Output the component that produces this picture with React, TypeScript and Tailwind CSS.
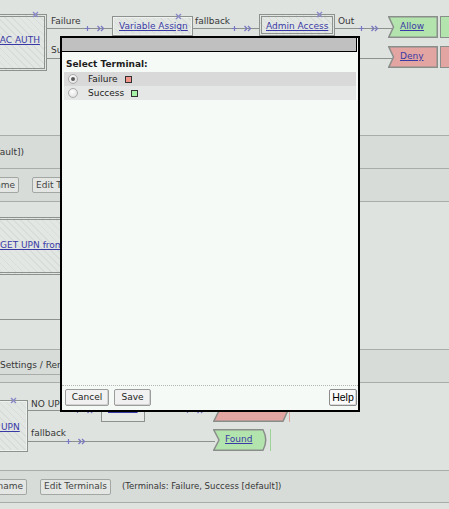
import React from "react"

const LINK = "whitespace-nowrap text-[#3a3aa6] underline decoration-[#3a3aa6] underline-offset-[1px]"
const HATCH =
  "bg-[repeating-linear-gradient(45deg,#d9ddda_0px,#d9ddda_1px,#e3e7e4_1px,#e3e7e4_5px)]"

function Line({ className }: { className: string }) {
  return <div className={`absolute h-px bg-[#8e928f] ${className}`} />
}

function Conn({ className }: { className: string }) {
  return (
    <svg className={`absolute ${className}`} width="21" height="7" viewBox="0 0 21 7">
      <path d="M0 3.5h5M2.5 1v5" stroke="#7878c0" strokeWidth="1.2" />
      <path d="M12.5 1l2.5 2.5L12.5 6M16 1l2.5 2.5L16 6" stroke="#7878c0" strokeWidth="1.3" fill="none" />
    </svg>
  )
}

function Close({ className }: { className: string }) {
  return (
    <svg className={`absolute ${className}`} width="7" height="7" viewBox="0 0 7 7">
      <path d="M1 1l5 5M6 1L1 6" stroke="#8a8ac8" strokeWidth="1.4" />
    </svg>
  )
}

function Btn({ children, className = "" }: { children: React.ReactNode; className?: string }) {
  return (
    <div
      className={`flex h-[16px] shrink-0 items-center whitespace-nowrap rounded-[2px] border border-[#a3a7a4] bg-[#e3e6e3] px-[3px] text-[#444] ${className}`}
    >
      {children}
    </div>
  )
}

function TopCanvas() {
  return (
    <div className="relative h-[135px] shrink-0">
      {/* MAC AUTH */}
      <div className={`absolute left-[-40px] top-[14px] h-[57px] w-[87px] border-[3px] border-double border-[#8e928f] ${HATCH}`} />
      <Close className="left-[32px] top-[11px]" />
      <a className={`absolute left-[-8px] top-[35px] ${LINK}`}>MAC AUTH</a>

      <Line className="left-[47px] top-[28px] w-[65px]" />
      <span className="absolute left-[51px] top-[16px]">Failure</span>
      <Conn className="left-[85px] top-[25px]" />
      <Line className="left-[47px] top-[58px] w-[20px]" />
      <span className="absolute left-[51px] top-[45px]">Su</span>

      {/* Variable Assign */}
      <div className={`absolute left-[112px] top-[16px] h-[20px] w-[81px] border border-[#8e928f] shadow-[inset_0_0_0_1px_#eef1ee] ${HATCH}`} />
      <Close className="left-[175px] top-[13px]" />
      <a className={`absolute left-[119px] top-[21px] ${LINK}`}>Variable Assign</a>

      <Line className="left-[193px] top-[28px] w-[66px]" />
      <span className="absolute left-[195px] top-[16px]">fallback</span>
      <Conn className="left-[232px] top-[25px]" />

      {/* Admin Access */}
      <div className={`absolute left-[259px] top-[14px] h-[22px] w-[76px] border-[3px] border-double border-[#8e928f] ${HATCH}`} />
      <Close className="left-[316px] top-[11px]" />
      <a className={`absolute left-[266px] top-[21px] ${LINK}`}>Admin Access</a>

      <Line className="left-[335px] top-[28px] w-[58px]" />
      <span className="absolute left-[338px] top-[16px]">Out</span>
      <Conn className="left-[359px] top-[25px]" />

      {/* Allow */}
      <div className="absolute left-[388px] top-[16px] h-[22px] w-[50px]">
        <svg className="absolute inset-0" width="50" height="22" viewBox="0 0 50 22">
          <path d="M0.75 0.75H49.25V21.25H0.75L5.5 11Z" fill="#b3e4ad" stroke="#8a8e8b" strokeWidth="1.5" />
        </svg>
        <a className={`absolute left-[12px] top-[5px] ${LINK}`}>Allow</a>
      </div>
      <div className="absolute left-[440px] top-[16px] h-[22px] w-[14px] border border-[#8a8e8b] bg-[#b3e4ad]" />

      {/* Deny */}
      <Line className="left-[300px] top-[58px] w-[93px]" />
      <div className="absolute left-[388px] top-[46px] h-[22px] w-[50px]">
        <svg className="absolute inset-0" width="50" height="22" viewBox="0 0 50 22">
          <path d="M0.75 0.75H49.25V21.25H0.75L5.5 11Z" fill="#e2a5a1" stroke="#8a8e8b" strokeWidth="1.5" />
        </svg>
        <a className={`absolute left-[12px] top-[5px] ${LINK}`}>Deny</a>
      </div>
      <div className="absolute left-[440px] top-[46px] h-[22px] w-[14px] border border-[#8a8e8b] bg-[#e2a5a1]" />
    </div>
  )
}

function MidCanvas() {
  return (
    <div className="relative h-[148px] shrink-0 border-t border-[#a9adaa]">
      <div className={`absolute left-[-20px] top-[15px] h-[58px] w-[200px] border-y-[3px] border-double border-[#8e928f] ${HATCH}`} />
      <a className={`absolute left-[0px] top-[38px] ${LINK}`}>GET UPN from LDAP</a>
      <Line className="left-0 top-[117px] w-[120px]" />
    </div>
  )
}

function LowCanvas() {
  return (
    <div className="relative h-[88px] shrink-0 border-t border-[#a9adaa]">
      {/* GET UPN */}
      <div className={`absolute left-[-60px] top-[17px] h-[52px] w-[88px] border border-[#8e928f] shadow-[inset_0_0_0_1px_#eef1ee] ${HATCH}`} />
      <Close className="left-[10px] top-[14px]" />
      <a className={`absolute left-[-20px] top-[39px] ${LINK}`}>GET UPN</a>

      <Line className="left-[28px] top-[27px] w-[73px]" />
      <span className="absolute left-[31px] top-[16px]">NO UPN</span>
      <Conn className="left-[75px] top-[24px]" />

      {/* Failure */}
      <div className="absolute left-[101px] top-[13px] h-[26px] w-[44px] border border-[#8e928f] bg-[#e5e8e5]" />
      <a className={`absolute left-[108px] top-[20px] ${LINK}`}>Failure</a>

      <Line className="left-[145px] top-[27px] w-[70px]" />
      <Conn className="left-[185px] top-[24px]" />

      {/* Not Found */}
      <div className="absolute left-[213px] top-[17px] h-[22px] w-[80px]">
        <svg className="absolute inset-0" width="80" height="22" viewBox="0 0 80 22">
          <path d="M0.75 21.25L11 0.75H79.25L70 21.25Z" fill="#e2a5a1" stroke="#8a8e8b" strokeWidth="1.5" />
        </svg>
        <a className={`absolute left-[12px] top-[2px] ${LINK}`}>Not Found</a>
      </div>
      <div className="absolute left-[289px] top-[17px] h-[22px] w-px bg-[#e2a5a1]" />

      <Line className="left-[28px] top-[58px] w-[187px]" />
      <span className="absolute left-[31px] top-[45px]">fallback</span>
      <Conn className="left-[66px] top-[55px]" />

      {/* Found */}
      <div className="absolute left-[213px] top-[46px] h-[22px] w-[54px]">
        <svg className="absolute inset-0" width="54" height="22" viewBox="0 0 54 22">
          <path d="M0.75 0.75H50Q55.5 11 50 21.25H0.75L6 11Z" fill="#b3e4ad" stroke="#8a8e8b" strokeWidth="1.5" />
        </svg>
        <a className={`absolute left-[12px] top-[5px] ${LINK}`}>Found</a>
      </div>
      <div className="absolute left-[270px] top-[46px] h-[22px] w-px bg-[#9bd496]" />
    </div>
  )
}

function TermRow({
  label,
  checked,
  swatch,
  bg,
}: {
  label: string
  checked?: boolean
  swatch: string
  bg: string
}) {
  return (
    <div className={`flex h-[14px] items-center pl-[4px] ${bg}`}>
      <div className="flex h-[10px] w-[10px] items-center justify-center rounded-full border border-[#ababab] bg-[radial-gradient(circle_at_40%_35%,#ffffff,#d9d9d9)]">
        {checked && <div className="h-[4px] w-[4px] rounded-full bg-[#5a5a5a]" />}
      </div>
      <span className="ml-[10px] text-[#222]">{label}</span>
      <div className={`ml-[7px] h-[7px] w-[7px] border border-[#333] ${swatch}`} />
    </div>
  )
}

function Dialog() {
  return (
    <div className="absolute left-[60px] top-[36px] flex h-[376px] w-[300px] flex-col border-2 border-black bg-[#f6faf7]">
      <div className="mr-[1px] h-[14px] shrink-0 border-b border-r border-black bg-[#c0c0c0]" />
      <div className="flex-1 px-[2px] pt-[6px]">
        <div className="pl-[2px] font-bold leading-[12px] text-[#1e1e1e]">Select Terminal:</div>
        <div className="mt-[2px]">
          <TermRow label="Failure" checked swatch="bg-[#f4958b]" bg="bg-[#d9d9d9]" />
          <TermRow label="Success" swatch="bg-[#a6f2a6]" bg="bg-[#e4e7e5]" />
        </div>
      </div>
      <div className="flex h-[25px] shrink-0 items-start gap-[5px] border-t border-dotted border-[#b3b6b4] pl-[3px] pr-[1px] pt-[3px]">
        <button className="flex h-[17px] w-[44px] items-center justify-center rounded-[2px] border border-[#9c9c9c] bg-[#f1f1f1] text-[#222] shadow-[inset_-1px_-1px_0_#d2d2d2]">
          Cancel
        </button>
        <button className="flex h-[17px] w-[37px] items-center justify-center rounded-[2px] border border-[#9c9c9c] bg-[#f1f1f1] text-[#222] shadow-[inset_-1px_-1px_0_#d2d2d2]">
          Save
        </button>
        <div className="flex-1" />
        <button className="flex h-[17px] w-[28px] items-center justify-center rounded-[2px] border border-[#8c8c8c] bg-[#fbfbfb] font-['Liberation_Sans',Arial,sans-serif] text-[10.5px] text-black shadow-[inset_-1px_-1px_0_#dadada]">
          Help
        </button>
      </div>
    </div>
  )
}

export default function App() {
  return (
    <div className="relative flex h-[509px] w-[449px] flex-col overflow-hidden bg-[#dfe3e0] font-['DejaVu_Sans',sans-serif] text-[9px] leading-[11px] text-[#363636]">
      <TopCanvas />

      <div className="flex h-[33px] shrink-0 items-center border-t border-[#a9adaa] bg-[#d8dcd9]">
        <div className="flex w-[24px] shrink-0 justify-end">
          <span className="whitespace-nowrap">(Terminals: Failure, Success [default])</span>
        </div>
      </div>

      <div className="flex h-[33px] shrink-0 items-center border-t border-[#a9adaa] bg-[#d8dcd9]">
        <div className="flex w-[19px] shrink-0 justify-end">
          <Btn>Rename</Btn>
        </div>
        <Btn className="ml-[13px]">Edit Terminals</Btn>
      </div>

      <MidCanvas />

      <div className="flex h-[33px] shrink-0 flex-col border-t border-[#a9adaa] bg-[#d8dcd9]">
        <div className="h-[25px] w-[200px] whitespace-nowrap border-b border-[#a9adaa] pt-[10px]">Settings / Rename</div>
      </div>

      <LowCanvas />

      <div className="flex h-[32px] shrink-0 items-center border-t border-[#a9adaa] bg-[#d8dcd9]">
        <div className="flex w-[27px] shrink-0 justify-end">
          <Btn>Rename</Btn>
        </div>
        <Btn className="ml-[13px]">Edit Terminals</Btn>
        <span className="ml-[11px] whitespace-nowrap text-[8.5px]">(Terminals: Failure, Success [default])</span>
      </div>

      <div className="flex-1 border-t border-[#a9adaa]" />

      <Dialog />
    </div>
  )
}
